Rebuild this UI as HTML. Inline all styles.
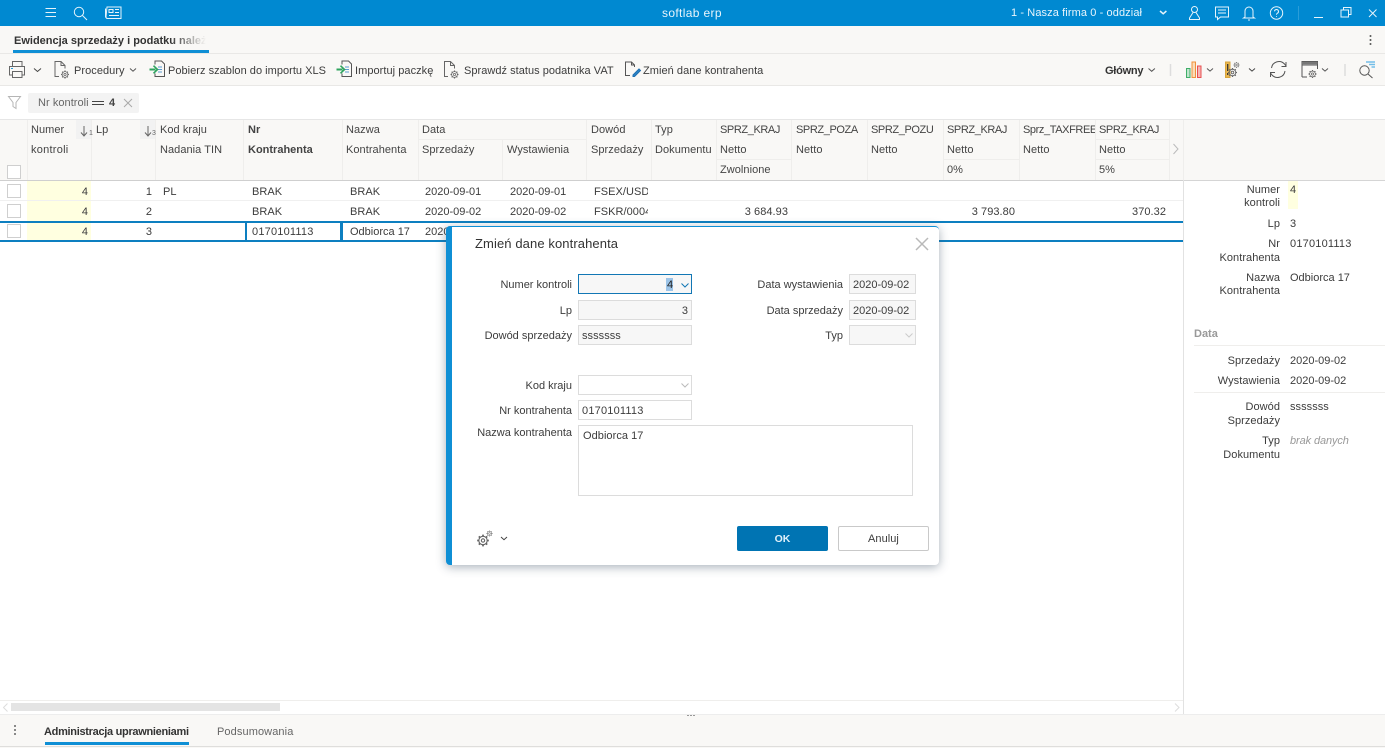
<!DOCTYPE html>
<html lang="pl"><head><meta charset="utf-8"><title>softlab erp</title>
<style>
html,body{margin:0;padding:0;width:1385px;height:748px;overflow:hidden;background:#fff}
body{position:relative;font-family:"Liberation Sans",sans-serif;font-size:11px;color:#3c3c3c}
.a{position:absolute}
.t{position:absolute;white-space:nowrap;line-height:14px;letter-spacing:.05px;margin-top:1px}
.n{margin-top:0}
.d{letter-spacing:0}
.c{letter-spacing:-.4px}
.r{text-align:right}
.h{color:#444}
.b{font-weight:bold}
.l{position:absolute;background:#efeeec}
.cb{position:absolute;width:12px;height:12px;border:1px solid #cfcfcf;background:#fff;box-sizing:content-box}
.f{position:absolute;box-sizing:border-box;border:1px solid #dcdcdc;background:#f7f7f7;height:20px}
svg{position:absolute;overflow:visible}
</style></head><body>
<svg width="0" height="0" style="left:0;top:0"><defs><g id="gear" fill="none" stroke-linecap="butt"><circle r="3.800"/><circle r="1.500"/><path stroke-width="1.600" d="M0-3.600V-5.300M0 3.600V5.300M-3.600 0H-5.300M3.600 0H5.300M2.500-2.500L3.800-3.800M-2.500 2.500L-3.800 3.800M2.500 2.500L3.800 3.800M-2.500-2.500L-3.800-3.800"/></g></defs></svg>

<!-- top bar -->
<div class="a" style="left:0;top:0;width:1385px;height:26px;background:#0089d1"></div>
<svg style="left:0;top:0" width="1385" height="26" fill="none" stroke="#e6f4fb" stroke-width="1">
<path d="M45.500 8.500h10.500M45.500 12.500h10.500M45.500 16.500h10.500"/>
<circle cx="79" cy="12" r="4.700"/><path d="M82.500 15.500l4.500 4.500"/>
<path d="M107 7h14v11.500h-13.500a1.500 1.500 0 0 1-1.500-1.500zM105.500 8.500v9"/><path d="M109 9.500h4v3h-4zM115 9.500h4M115 12.500h4M109 15.500h10"/>
<path d="M1160 11l3.200 2.800 3.200-2.800" stroke-width="1.500"/>
<circle cx="1194.500" cy="9.500" r="3"/><path d="M1193 12.500l-3.500 5.500v1.500h10v-1.500l-3.500-5.500"/>
<path d="M1215.500 7h13v10h-8l-3 2.500v-2.500h-2zM1218 10h8M1218 13h8"/>
<path d="M1245 17v-6a4 4 0 0 1 8 0v6l1.500 1h-11z"/><path d="M1248 20h2"/>
<circle cx="1276.500" cy="13" r="6.200"/><path d="M1274.500 11.300a2 2 0 1 1 2.800 2c-.8.400-.8 1-.8 1.500M1276.500 16v.8"/>
<path d="M1298.500 6v14" stroke="#2a9dd9"/>
<path d="M1314 17.500h9"/>
<path d="M1341 10h7.500v7H1341zM1343.500 10V7.500h7.500v7h-2.500"/>
<path d="M1369 9.500l7.500 7.500M1376.500 9.500L1369 17"/>
</svg>
<div class="t n" style="left:662px;top:6px;color:#e8f5fc;font-size:12px;letter-spacing:.35px">softlab erp</div>
<div class="t n" style="left:1011px;top:6px;color:#e8f5fc;font-size:11px;letter-spacing:.1px">1 - Nasza firma 0 - oddział</div>

<!-- tab bar -->
<div class="a" style="left:0;top:26px;width:1385px;height:27px;background:#f9f8f6"></div>
<div class="l" style="left:0;top:53px;width:1385px;height:1px;background:#e9e8e6"></div>
<div class="t n b" style="left:14px;top:34px;color:#333;width:196px;overflow:hidden;letter-spacing:0">Ewidencja sprzedaży i podatku należne</div>
<div class="a" style="left:170px;top:32px;width:40px;height:16px;background:linear-gradient(90deg,rgba(249,248,246,0),#f9f8f6 90%)"></div>
<div class="a" style="left:13px;top:50px;width:196px;height:3px;background:#0f8fd5"></div>
<svg style="left:0;top:0" width="1385" height="60"><circle cx="1370.500" cy="36" r="1" fill="#555"/><circle cx="1370.500" cy="40" r="1" fill="#555"/><circle cx="1370.500" cy="44" r="1" fill="#555"/></svg>

<!-- toolbar -->
<div class="a" style="left:0;top:54px;width:1385px;height:31px;background:#f9f8f6"></div>
<div class="l" style="left:0;top:85px;width:1385px;height:1px;background:#e9e8e6"></div>
<svg style="left:0;top:54px" width="1385" height="31" fill="none" stroke="#666" stroke-width="1">
<path d="M12.500 12.500v-5h9.500v5M12.500 21h-3v-8.500h15V21h-3"/><path d="M12.500 17.500h9.500v6h-9.500z"/><path d="M11 14.500h2" stroke="#2a9dd9"/>
<path d="M34 14.500l3.500 3 3.500-3" stroke="#444"/>
<path d="M59 22.500h-4v-15h6l4 4v3M61 7.500v4h4"/><use href="#gear" transform="translate(65 20.500) scale(.75)"/>
<path d="M130 14.500l3 2.700 3-2.700" stroke="#555"/>
<path d="M155 10.500v-3.500h6.500l3 3v12.500h-9.500v-3" stroke="#555"/><path d="M158 13h4M158 15.500h4M158 18h4" stroke="#5a9bd0"/><path d="M149.500 15.500h6" stroke="#2fa45f" stroke-width="2"/><path d="M153.500 11.700l4 3.800-4 3.800" stroke="#2fa45f" stroke-width="1.600"/>
<path d="M342 10.500v-3.500h6.500l3 3v12.500h-9.500v-3" stroke="#555"/><path d="M345 13h4M345 15.500h4M345 18h4" stroke="#5a9bd0"/><path d="M336.500 15.500h6" stroke="#2fa45f" stroke-width="2"/><path d="M340.500 11.700l4 3.800-4 3.800" stroke="#2fa45f" stroke-width="1.600"/>
<path d="M448 22.500h-3.500v-15h6l4 4v3M450.500 7.500v4h4"/><use href="#gear" transform="translate(454.500 20.500) scale(.75)"/>
<path d="M630 21.500h-4.500V8h6l3 3v2M631.500 8v3h3" stroke="#555"/><path d="M633 21l6-6 1.500 1.500-6 6h-1.500z" stroke="#1f6fb0" fill="#2b86c9"/>
<path d="M1148.500 14.500l3.200 2.800 3.200-2.800" stroke="#555"/>
<path d="M1170.500 10v12" stroke="#ddd" stroke-width="1.500"/>
<path d="M1186.500 14.500h3.500v9h-3.500z" stroke="#3fae68" fill="#bfe5cd"/><path d="M1192 8h3.500v15.500H1192z" stroke="#f0923c" fill="#fbdcb9"/><path d="M1197.500 12h3.500v11.500h-3.500z" stroke="#e85050" fill="#f6b6b6"/>
<path d="M1207 14.500l3 2.600 3-2.600" stroke="#555"/>
<path d="M1225.500 8h4.500v15.500h-4.500z" fill="#e9b64f" stroke="#d8a53c"/><path d="M1227.700 10v7M1227.700 19v2" stroke="#333" stroke-width="1.300"/>
<use href="#gear" transform="translate(1236.500 11) scale(.55)"/><use href="#gear" transform="translate(1232.500 18.500) scale(.85)"/>
<path d="M1249 14.500l3 2.600 3-2.600" stroke="#444"/>
<path d="M1271.500 14a7.500 7.500 0 0 1 13-4l1.500 2M1286 8v4.500h-4.500M1285 17a7.500 7.500 0 0 1-13 4l-1.500-2M1270.500 23v-4.500h4.500" stroke="#555"/>
<path d="M1302 23v-15.500h15.500V15M1302 11h15.500M1302 23h5" stroke="#555"/><path d="M1302 9h15.500" stroke="#777" stroke-width="2.500"/><use href="#gear" transform="translate(1312.500 20) scale(.75)"/>
<path d="M1322 14.500l3 2.600 3-2.600" stroke="#555"/>
<path d="M1345 10v12" stroke="#ddd" stroke-width="1.500"/>
<circle cx="1364.500" cy="16.500" r="4.700" stroke="#555"/><path d="M1368 20l4.500 4" stroke="#555"/><path d="M1366 8h9M1369 10.500h6M1371.500 13h3.500" stroke="#72bde8" stroke-width="1.500"/>
</svg>
<div class="t" style="left:74px;top:63px">Procedury</div>
<div class="t" style="left:168px;top:63px;letter-spacing:.03px">Pobierz szablon do importu XLS</div>
<div class="t" style="left:355px;top:63px">Importuj paczkę</div>
<div class="t" style="left:464px;top:63px;letter-spacing:.03px">Sprawdź status podatnika VAT</div>
<div class="t" style="left:643px;top:63px">Zmień dane kontrahenta</div>
<div class="t b" style="left:1105px;top:63px;color:#333;letter-spacing:-.25px">Główny</div>

<!-- filter row -->
<svg style="left:0;top:86px" width="150" height="33" fill="none" stroke="#b5b5b5"><path d="M8.500 10.500h12l-4.500 6v6l-3-2v-4z"/></svg>
<div class="a" style="left:28px;top:93px;width:111px;height:20px;background:#f3f3f3;border-radius:2px"></div>
<div class="t n" style="left:38px;top:96px;color:#666">Nr kontroli</div>
<div class="a" style="left:92px;top:101px;width:12px;height:1px;background:#444"></div>
<div class="a" style="left:92px;top:104px;width:12px;height:1px;background:#444"></div>
<div class="t n b" style="left:109px;top:96px;color:#444">4</div>
<svg style="left:123px;top:98px" width="10" height="10" fill="none" stroke="#aaa"><path d="M1 1l8 8M9 1l-8 8"/></svg>
<div class="l" style="left:0;top:119px;width:1385px;height:1px;background:#e6e6e6"></div>

<!-- grid header -->
<div class="a" style="left:0;top:120px;width:1385px;height:60px;background:#f9f8f6"></div>
<div class="l" style="left:0;top:180px;width:1184px;height:1px;background:#cfcfcf"></div>
<div class="l" style="left:1184px;top:180px;width:201px;height:1px;background:#d5d5d5"></div>
<!-- column lines -->
<div class="l" style="left:27px;top:120px;width:1px;height:60px"></div>
<div class="l" style="left:91px;top:120px;width:1px;height:60px"></div>
<div class="l" style="left:155px;top:120px;width:1px;height:60px"></div>
<div class="l" style="left:243px;top:120px;width:1px;height:60px"></div>
<div class="l" style="left:342px;top:120px;width:1px;height:60px"></div>
<div class="l" style="left:418px;top:120px;width:1px;height:60px"></div>
<div class="l" style="left:502px;top:139px;width:1px;height:41px"></div>
<div class="l" style="left:586px;top:120px;width:1px;height:60px"></div>
<div class="l" style="left:651px;top:120px;width:1px;height:60px"></div>
<div class="l" style="left:716px;top:120px;width:1px;height:60px"></div>
<div class="l" style="left:791px;top:120px;width:1px;height:60px"></div>
<div class="l" style="left:867px;top:120px;width:1px;height:60px"></div>
<div class="l" style="left:943px;top:120px;width:1px;height:60px"></div>
<div class="l" style="left:1019px;top:120px;width:1px;height:60px"></div>
<div class="l" style="left:1095px;top:120px;width:1px;height:60px"></div>
<div class="l" style="left:1169px;top:120px;width:1px;height:60px"></div>
<div class="l" style="left:1183px;top:120px;width:1px;height:60px"></div>
<div class="l" style="left:418px;top:139px;width:168px;height:1px"></div>
<div class="l" style="left:716px;top:159px;width:75px;height:1px"></div>
<div class="l" style="left:943px;top:159px;width:76px;height:1px"></div>
<div class="l" style="left:1095px;top:139px;width:74px;height:1px"></div>
<div class="l" style="left:1095px;top:159px;width:74px;height:1px"></div>
<div class="a" style="left:76px;top:120px;width:15px;height:19px;background:#f2f2f2"></div>
<div class="a" style="left:140px;top:120px;width:15px;height:19px;background:#f2f2f2"></div>
<svg style="left:0;top:120px" width="1385" height="60" fill="none" stroke="#666">
<path d="M84 6v10M81 12.500l3 3.500 3-3.500M148 6v10M145 12.500l3 3.500 3-3.500"/>
<path d="M1173.500 24l4.500 5-4.500 5" stroke="#bbb"/>
</svg>
<div class="t n" style="left:89px;top:130px;font-size:7px;line-height:8px;color:#666">1</div>
<div class="t n" style="left:152px;top:130px;font-size:7px;line-height:8px;color:#666">3</div>
<div class="cb" style="left:7px;top:165px"></div>

<div class="t h" style="left:31px;top:122px">Numer</div><div class="t h" style="left:31px;top:142px;letter-spacing:.25px">kontroli</div>
<div class="t h" style="left:96px;top:122px">Lp</div>
<div class="t h" style="left:160px;top:122px">Kod kraju</div><div class="t h" style="left:160px;top:142px">Nadania TIN</div>
<div class="t h b" style="left:248px;top:122px;letter-spacing:0">Nr</div><div class="t h b" style="left:248px;top:142px;letter-spacing:0">Kontrahenta</div>
<div class="t h" style="left:346px;top:122px">Nazwa</div><div class="t h" style="left:346px;top:142px">Kontrahenta</div>
<div class="t h" style="left:422px;top:122px">Data</div><div class="t h" style="left:422px;top:142px">Sprzedaży</div>
<div class="t h" style="left:507px;top:142px">Wystawienia</div>
<div class="t h" style="left:591px;top:122px">Dowód</div><div class="t h" style="left:591px;top:142px">Sprzedaży</div>
<div class="t h" style="left:655px;top:122px">Typ</div><div class="t h" style="left:655px;top:142px">Dokumentu</div>
<div class="t h c" style="left:720px;top:122px">SPRZ_KRAJ</div><div class="t h" style="left:720px;top:142px">Netto</div><div class="t h" style="left:720px;top:162px">Zwolnione</div>
<div class="t h c" style="left:796px;top:122px">SPRZ_POZA</div><div class="t h" style="left:796px;top:142px">Netto</div>
<div class="t h c" style="left:871px;top:122px">SPRZ_POZU</div><div class="t h" style="left:871px;top:142px">Netto</div>
<div class="t h c" style="left:947px;top:122px">SPRZ_KRAJ</div><div class="t h" style="left:947px;top:142px">Netto</div><div class="t h" style="left:947px;top:162px">0%</div>
<div class="t h c" style="left:1023px;top:122px;width:72px;overflow:hidden">Sprz_TAXFREE</div><div class="t h" style="left:1023px;top:142px">Netto</div>
<div class="t h c" style="left:1099px;top:122px">SPRZ_KRAJ</div><div class="t h" style="left:1099px;top:142px">Netto</div><div class="t h" style="left:1099px;top:162px">5%</div>

<!-- rows -->
<div class="a" style="left:27px;top:181px;width:64px;height:60px;background:#ffffe0"></div>
<div class="l" style="left:0;top:200px;width:1183px;height:1px;background:#f0f0f0"></div>
<div class="cb" style="left:7px;top:184px"></div><div class="cb" style="left:7px;top:204px"></div><div class="cb" style="left:7px;top:224px"></div>
<div class="t r" style="left:40px;top:184px;width:48px">4</div><div class="t r" style="left:100px;top:184px;width:52px">1</div>
<div class="t" style="left:163px;top:184px">PL</div><div class="t" style="left:252px;top:184px">BRAK</div><div class="t" style="left:350px;top:184px">BRAK</div>
<div class="t d" style="left:425px;top:184px">2020-09-01</div><div class="t d" style="left:510px;top:184px">2020-09-01</div>
<div class="t" style="left:594px;top:184px;width:54px;overflow:hidden">FSEX/USD/2020</div>
<div class="t r" style="left:40px;top:204px;width:48px">4</div><div class="t r" style="left:100px;top:204px;width:52px">2</div>
<div class="t" style="left:252px;top:204px">BRAK</div><div class="t" style="left:350px;top:204px">BRAK</div>
<div class="t d" style="left:425px;top:204px">2020-09-02</div><div class="t d" style="left:510px;top:204px">2020-09-02</div>
<div class="t" style="left:594px;top:204px;width:54px;overflow:hidden">FSKR/0004/2020</div>
<div class="t r" style="left:700px;top:204px;width:88px">3 684.93</div>
<div class="t r" style="left:930px;top:204px;width:85px">3 793.80</div>
<div class="t r" style="left:1090px;top:204px;width:76px">370.32</div>
<!-- selected row -->
<div class="a" style="left:0;top:221px;width:1183px;height:2px;background:#0d7fc0"></div>
<div class="a" style="left:0;top:240px;width:1183px;height:2px;background:#0d7fc0"></div>
<div class="a" style="box-sizing:border-box;left:245px;top:221px;width:97px;height:21px;border:2px solid #0d7fc0"></div>
<div class="a" style="box-sizing:border-box;left:341px;top:221px;width:2px;height:21px;background:#0d7fc0"></div>
<div class="t r" style="left:40px;top:224px;width:48px">4</div><div class="t r" style="left:100px;top:224px;width:52px">3</div>
<div class="t" style="left:252px;top:224px;letter-spacing:.2px">0170101113</div><div class="t d" style="left:350px;top:224px">Odbiorca 17</div>
<div class="t d" style="left:425px;top:224px">2020-09-02</div>

<!-- right panel -->
<div class="a" style="left:1183px;top:180px;width:1px;height:534px;background:#e2e2e2"></div>
<div class="a" style="left:1288px;top:181px;width:10px;height:28px;background:#ffffe0"></div>
<div class="t r" style="left:1190px;top:182px;width:90px">Numer</div><div class="t r" style="left:1190px;top:195px;width:90px">kontroli</div>
<div class="t" style="left:1290px;top:182px">4</div>
<div class="t r" style="left:1190px;top:216px;width:90px">Lp</div><div class="t" style="left:1290px;top:216px">3</div>
<div class="t r" style="left:1190px;top:236px;width:90px">Nr</div><div class="t r" style="left:1190px;top:250px;width:90px">Kontrahenta</div>
<div class="t" style="left:1290px;top:236px;letter-spacing:.2px">0170101113</div>
<div class="t r" style="left:1190px;top:270px;width:90px">Nazwa</div><div class="t r" style="left:1190px;top:283px;width:90px">Kontrahenta</div>
<div class="t d" style="left:1290px;top:270px">Odbiorca 17</div>
<div class="t b" style="left:1194px;top:326px;color:#999;letter-spacing:0">Data</div>
<div class="l" style="left:1194px;top:345px;width:191px;height:1px"></div>
<div class="t r" style="left:1190px;top:353px;width:90px">Sprzedaży</div><div class="t d" style="left:1290px;top:353px">2020-09-02</div>
<div class="t r" style="left:1190px;top:373px;width:90px">Wystawienia</div><div class="t d" style="left:1290px;top:373px">2020-09-02</div>
<div class="l" style="left:1194px;top:392px;width:191px;height:1px"></div>
<div class="t r" style="left:1190px;top:399px;width:90px">Dowód</div><div class="t r" style="left:1190px;top:413px;width:90px">Sprzedaży</div>
<div class="t" style="left:1290px;top:399px">sssssss</div>
<div class="t r" style="left:1190px;top:433px;width:90px">Typ</div><div class="t r" style="left:1190px;top:447px;width:90px">Dokumentu</div>
<div class="t" style="left:1290px;top:433px;color:#999;font-style:italic;letter-spacing:-.1px">brak danych</div>

<!-- dialog -->
<div class="a" style="box-sizing:border-box;left:446px;top:226px;width:493px;height:339px;background:#fff;border-left:6px solid #0f8fd5;border-top:1px solid #0f8fd5;border-radius:4px;box-shadow:0 2px 10px rgba(60,80,100,.45)"></div>
<div class="t" style="left:475px;top:236px;font-size:13px;color:#333;letter-spacing:.1px">Zmień dane kontrahenta</div>
<svg style="left:915px;top:237px" width="14" height="14" fill="none" stroke="#b9b9b9" stroke-width="1.500"><path d="M1 1l12 12M13 1L1 13"/></svg>

<div class="t r d" style="left:460px;top:277px;width:112px">Numer kontroli</div>
<div class="f" style="left:578px;top:274px;width:114px;border-color:#1277b5;height:20px"></div>
<div class="a" style="left:666px;top:278px;width:7px;height:13px;background:#9cc4e8"></div>
<div class="t" style="left:667px;top:277px;color:#222">4</div>
<svg style="left:681px;top:283px" width="8" height="5" fill="none" stroke="#1277b5"><path d="M.5.500L4 4 7.500.500"/></svg>

<div class="t r d" style="left:460px;top:303px;width:112px">Lp</div>
<div class="f" style="left:578px;top:300px;width:114px"></div>
<div class="t r" style="left:600px;top:303px;width:88px">3</div>

<div class="t r d" style="left:460px;top:328px;width:112px">Dowód sprzedaży</div>
<div class="f" style="left:578px;top:325px;width:114px;height:20px"></div>
<div class="t" style="left:582px;top:328px">sssssss</div>

<div class="t r d" style="left:460px;top:378px;width:112px">Kod kraju</div>
<div class="f" style="left:578px;top:375px;width:114px;background:#fff"></div>
<svg style="left:681px;top:383px" width="8" height="5" fill="none" stroke="#bbb"><path d="M.5.500L4 4 7.500.500"/></svg>

<div class="t r d" style="left:460px;top:403px;width:112px">Nr kontrahenta</div>
<div class="f" style="left:578px;top:400px;width:114px;background:#fff"></div>
<div class="t" style="left:582px;top:403px;letter-spacing:.2px">0170101113</div>

<div class="t r d" style="left:460px;top:425px;width:112px">Nazwa kontrahenta</div>
<div class="f" style="left:578px;top:425px;width:335px;height:71px;background:#fff"></div>
<div class="t" style="left:583px;top:428px">Odbiorca 17</div>

<div class="t r d" style="left:720px;top:277px;width:123px">Data wystawienia</div>
<div class="f" style="left:849px;top:274px;width:67px"></div>
<div class="t d" style="left:853px;top:277px">2020-09-02</div>
<div class="t r d" style="left:720px;top:303px;width:123px">Data sprzedaży</div>
<div class="f" style="left:849px;top:300px;width:67px"></div>
<div class="t d" style="left:853px;top:303px">2020-09-02</div>
<div class="t r d" style="left:720px;top:328px;width:123px">Typ</div>
<div class="f" style="left:849px;top:325px;width:67px"></div>
<svg style="left:905px;top:333px" width="8" height="5" fill="none" stroke="#ccc"><path d="M.5.500L4 4 7.500.500"/></svg>

<svg style="left:475px;top:530px" width="35" height="20" fill="none" stroke="#666">
<use href="#gear" transform="translate(8 10.500) scale(1.100)"/><use href="#gear" transform="translate(14.500 3.500) scale(.55)"/>
<path d="M26 7l3 2.700L32 7" stroke="#444"/>
</svg>
<div class="a" style="left:737px;top:526px;width:91px;height:25px;background:#0074b3;border-radius:2px"></div>
<div class="t b" style="left:737px;top:531px;width:91px;text-align:center;color:#dff0fa;letter-spacing:0;font-size:10.500px">OK</div>
<div class="a" style="box-sizing:border-box;left:838px;top:526px;width:91px;height:25px;background:#fff;border:1px solid #c9c9c9;border-radius:2px"></div>
<div class="t" style="left:838px;top:531px;width:91px;text-align:center">Anuluj</div>

<!-- bottom scrollbar -->
<div class="l" style="left:0;top:700px;width:1183px;height:1px"></div>
<svg style="left:0;top:700px" width="1185" height="15" fill="none" stroke="#ddd"><path d="M7.500 3.500L3.500 7.500l4 4M1175 3.500l4 4-4 4"/></svg>
<div class="a" style="left:11px;top:703px;width:269px;height:8px;background:#e4e4e4"></div>

<!-- bottom tabs -->
<div class="a" style="left:0;top:714px;width:1385px;height:32px;background:#f9f8f6;border-top:1px solid #ededed"></div>
<div class="a" style="left:0;top:746px;width:1385px;height:1px;background:#dfdedc"></div>
<div class="a" style="left:0;top:747px;width:1385px;height:1px;background:#f9f8f6"></div>
<svg style="left:0;top:714px" width="720" height="30"><circle cx="15" cy="12" r="1" fill="#666"/><circle cx="15" cy="16" r="1" fill="#666"/><circle cx="15" cy="20" r="1" fill="#666"/>
<path d="M687 1.500h2M690 1.500h2M693 1.500h2" stroke="#999" fill="none"/></svg>
<div class="t b" style="left:44px;top:724px;color:#333;letter-spacing:-.3px">Administracja uprawnieniami</div>
<div class="a" style="left:45px;top:742px;width:144px;height:3px;background:#0f8fd5"></div>
<div class="t" style="left:217px;top:724px;color:#666;letter-spacing:.1px">Podsumowania</div>
</body></html>
